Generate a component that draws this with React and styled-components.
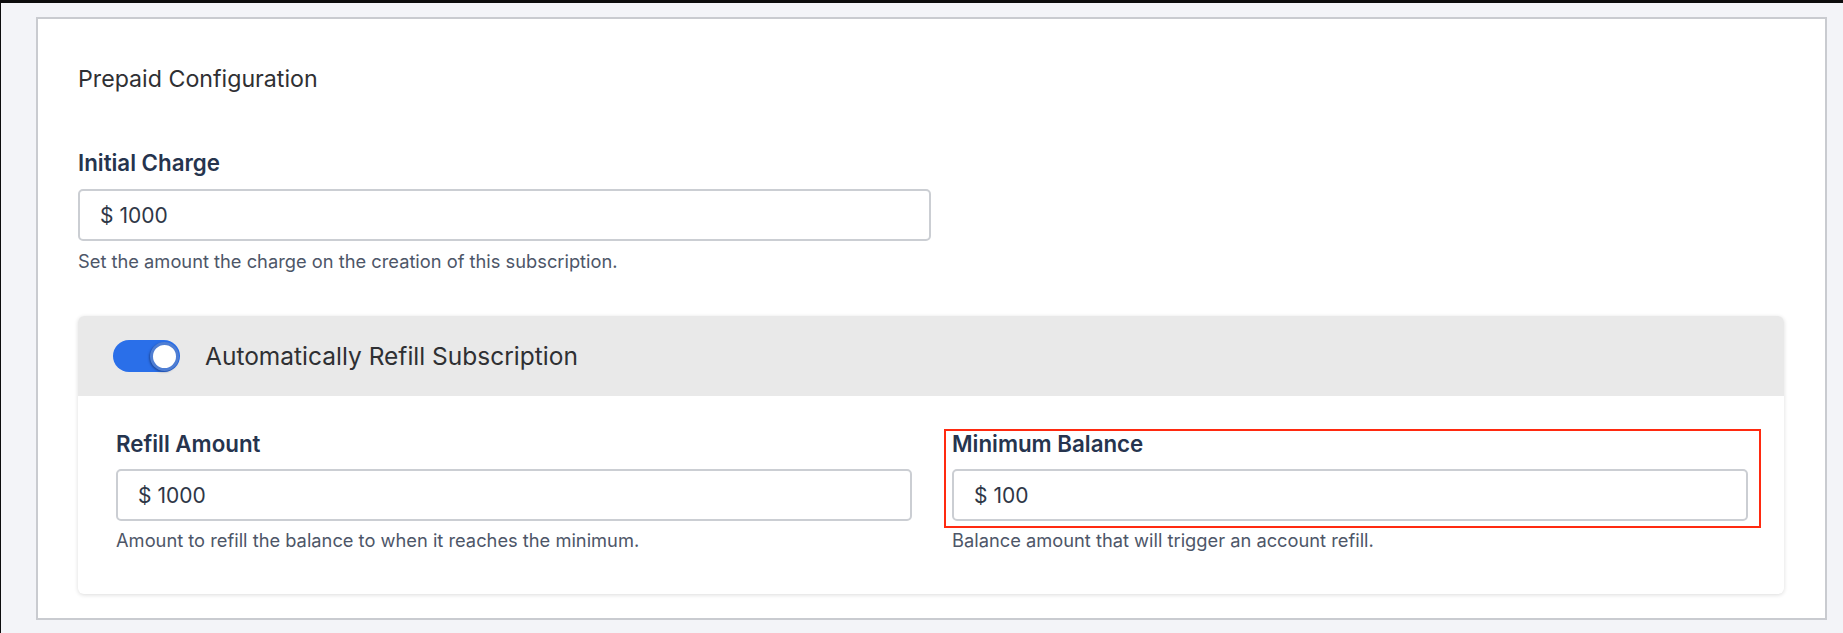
import styled, { createGlobalStyle } from 'styled-components';

const GlobalStyle = createGlobalStyle`
  * { box-sizing: border-box; }
  body {
    margin: 0;
    font-family: Inter, Lato, "Noto Sans", sans-serif;
    background: #f3f4f8;
  }
`

const Page = styled.div`
  min-height: 633px;
  background: #f3f4f8;
  border-top: 3px solid #0c0c0d;
  border-left: 1px solid #0c0c0d;
  padding: 14px 16px 13px 35px;
`

const Card = styled.section`
  background: #fff;
  border: 2px solid #c9cbd0;
  padding: 46px 41px 24px 40px;
`

const Title = styled.h2`
  margin: 0;
  font-size: 23.2px;
  line-height: 28px;
  font-weight: 400;
  color: #2f3033;
`

const Field = styled.div`
  position: relative;
  display: flex;
  flex-direction: column;
  margin-top: ${p => p.$top || 0}px;
  width: ${p => p.$half ? '50%' : '100%'};
`

const Label = styled.label`
  font-size: 22.3px;
  line-height: 28px;
  font-weight: 600;
  color: #26344e;
`

const InputBox = styled.div`
  display: flex;
  align-items: center;
  height: 52px;
  margin-top: ${p => p.$gap}px;
  padding: 0 20px;
  border: 2px solid #cbced3;
  border-radius: 5px;
  background: #fff;
  font-size: 21px;
  color: #2f3747;
  gap: 6px;
`

const Help = styled.p`
  margin: ${p => p.$gap}px 0 0;
  font-size: 18.3px;
  line-height: 24px;
  color: #4d5668;
`

const Panel = styled.div`
  margin-top: 43px;
  border-radius: 6px;
  background: #fff;
  box-shadow: 0 1px 4px rgba(0, 0, 0, 0.14);
  overflow: hidden;
`

const PanelHead = styled.div`
  height: 80px;
  display: flex;
  align-items: center;
  gap: 25px;
  padding: 0 35px;
  background: #e9e9e9;
  font-size: 24.5px;
  color: #2f3033;
`

const Track = styled.span`
  display: flex;
  align-items: center;
  justify-content: flex-end;
  width: 67px;
  height: 32px;
  padding: 0 1px;
  border-radius: 16px;
  background: #2a6fe9;
  flex-shrink: 0;
`

const Knob = styled.span`
  width: 29px;
  height: 29px;
  border-radius: 50%;
  background: #fff;
  border: 3px solid #4f7ed3;
  box-shadow: -1px 1px 2px rgba(20, 40, 90, 0.5);
`

const PanelBody = styled.div`
  display: grid;
  grid-template-columns: 1fr 1fr;
  column-gap: 40px;
  padding: 34px 36px 42px 38px;
`

const Highlight = styled.div`
  position: absolute;
  left: -8px;
  right: -13px;
  top: -1px;
  height: 99px;
  border: 2.5px solid #ff2a10;
  pointer-events: none;
`

function MoneyField({ label, value, help, labelGap = 12, helpGap = 8, half, top, marked }) {
  return (
    <Field $half={half} $top={top}>
      {marked && <Highlight />}
      <Label>{label}</Label>
      <InputBox $gap={labelGap}>
        <span>$</span>
        <span>{value}</span>
      </InputBox>
      <Help $gap={helpGap}>{help}</Help>
    </Field>
  )
}

export default function App() {
  return (
    <Page>
      <GlobalStyle />
      <Card>
        <Title>Prepaid Configuration</Title>
        <MoneyField
          half
          top={56}
          label="Initial Charge"
          value="1000"
          help="Set the amount the charge on the creation of this subscription."
        />
        <Panel>
          <PanelHead>
            <Track><Knob /></Track>
            <span>Automatically Refill Subscription</span>
          </PanelHead>
          <PanelBody>
            <MoneyField
              label="Refill Amount"
              value="1000"
              labelGap={11}
              helpGap={7}
              help="Amount to refill the balance to when it reaches the minimum."
            />
            <MoneyField
              marked
              label="Minimum Balance"
              value="100"
              labelGap={11}
              helpGap={7}
              help="Balance amount that will trigger an account refill."
            />
          </PanelBody>
        </Panel>
      </Card>
    </Page>
  )
}
